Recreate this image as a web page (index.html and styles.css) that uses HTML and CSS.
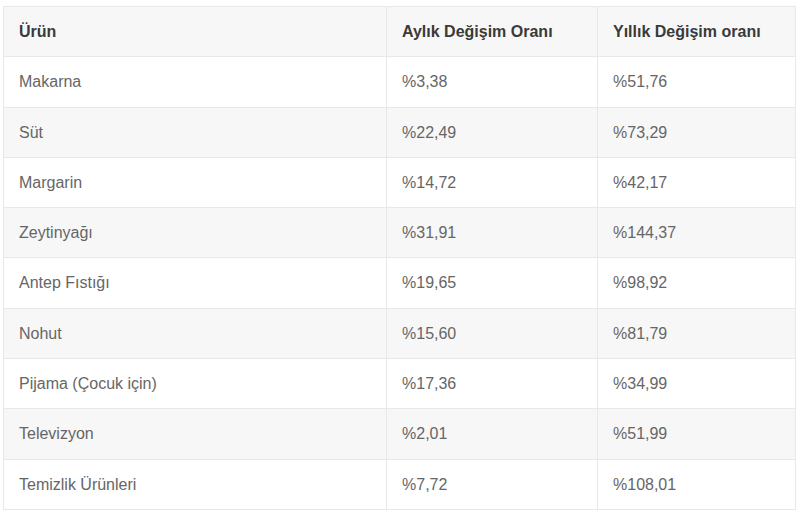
FILE: index.html
```html
<!DOCTYPE html>
<html lang="tr">
<head>
<meta charset="utf-8">
<link rel="stylesheet" href="styles.css">
</head>
<body>
<table class="data">
  <colgroup>
    <col class="c1"><col class="c2"><col class="c3">
  </colgroup>
  <thead>
    <tr><th>Ürün</th><th>Aylık Değişim Oranı</th><th>Yıllık Değişim oranı</th></tr>
  </thead>
  <tbody>
    <tr><td>Makarna</td><td>%3,38</td><td>%51,76</td></tr>
    <tr><td>Süt</td><td>%22,49</td><td>%73,29</td></tr>
    <tr><td>Margarin</td><td>%14,72</td><td>%42,17</td></tr>
    <tr><td>Zeytinyağı</td><td>%31,91</td><td>%144,37</td></tr>
    <tr><td>Antep Fıstığı</td><td>%19,65</td><td>%98,92</td></tr>
    <tr><td>Nohut</td><td>%15,60</td><td>%81,79</td></tr>
    <tr><td>Pijama (Çocuk için)</td><td>%17,36</td><td>%34,99</td></tr>
    <tr><td>Televizyon</td><td>%2,01</td><td>%51,99</td></tr>
    <tr><td>Temizlik Ürünleri</td><td>%7,72</td><td>%108,01</td></tr>
  </tbody>
</table>
</body>
</html>
```
FILE: styles.css
```css
html, body {
  margin: 0;
  background: #ffffff;
}
body {
  padding: 6px 5px 0 3px;
  font-family: "Liberation Sans", Arial, sans-serif;
}
.data {
  width: 792px;
  border-collapse: collapse;
  table-layout: fixed;
}
.c1 { width: 383px; }
.c2 { width: 211px; }
.c3 { width: 198px; }
.data th, .data td {
  border: 1px solid #e8e8e8;
  padding: 15px 15px;
  line-height: 19.3px;
  text-align: left;
  font-size: 16px;
}
.data th {
  font-weight: bold;
  color: #3a3a3a;
  background: #f7f7f7;
}
.data td {
  color: #666666;
}
.data tbody tr:nth-child(even) td {
  background: #f7f7f7;
}
```
